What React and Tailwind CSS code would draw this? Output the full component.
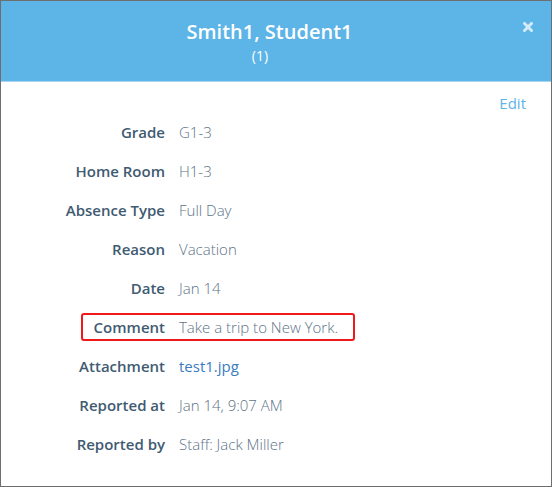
import React from "react";

const rows = [
  { label: "Grade", value: "G1-3" },
  { label: "Home Room", value: "H1-3" },
  { label: "Absence Type", value: "Full Day" },
  { label: "Reason", value: "Vacation" },
  { label: "Date", value: "Jan 14" },
  { label: "Comment", value: "Take a trip to New York.", highlight: true },
  { label: "Attachment", value: "test1.jpg", link: true },
  { label: "Reported at", value: "Jan 14, 9:07 AM" },
  { label: "Reported by", value: "Staff: Jack Miller" },
];

const DetailRow = ({ label, value, link, highlight }) => {
  return (
    <div className="flex items-center h-[39px]">
      <div
        className={
          highlight
            ? "flex items-center h-[28px] w-[274px] ml-[80px] border-2 border-[#f01818] rounded-[3px]"
            : "flex items-center h-[28px]"
        }
      >
        <span
          className={
            highlight
              ? "w-[82px] text-right font-semibold text-[#3f5b72]"
              : "w-[164px] text-right font-semibold text-[#3f5b72]"
          }
        >
          {label}
        </span>
        <span
          className={
            link
              ? "ml-[14px] text-[#3b7cc0]"
              : "ml-[14px] font-light text-[#5d7387]"
          }
        >
          {value}
        </span>
      </div>
    </div>
  );
};

export default function App() {
  return (
    <div
      className="w-[552px] h-[487px] border border-[#6e6e6e] bg-white overflow-hidden"
      style={{ fontFamily: '"Open Sans", "Noto Sans", sans-serif' }}
    >
      <div className="relative h-[81px] bg-[#5cb4e7] border-b border-[#a9d6f2] flex flex-col items-center text-white">
        <h1 className="mt-[17px] pr-[13px] text-[20px] leading-[28px] font-semibold">
          Smith1, Student1
        </h1>
        <div className="mt-[1px] pr-[32px] text-[14px] leading-[18px]">(1)</div>
        <button className="absolute right-[18px] top-[21px] text-[#d3eaf8]">
          <svg width="10" height="10" viewBox="0 0 10 10">
            <path
              d="M1.5 1.5 L8.5 8.5 M8.5 1.5 L1.5 8.5"
              stroke="currentColor"
              strokeWidth="3"
              strokeLinecap="square"
            />
          </svg>
        </button>
      </div>
      <div className="flex justify-end pr-[25px] pt-[11px] h-[30px]">
        <a className="text-[15px] leading-[20px] text-[#5cb4e7]">Edit</a>
      </div>
      <div className="flex flex-col text-[15px] leading-[20px]">
        {rows.map((r) => (
          <DetailRow key={r.label} {...r} />
        ))}
      </div>
    </div>
  );
}
